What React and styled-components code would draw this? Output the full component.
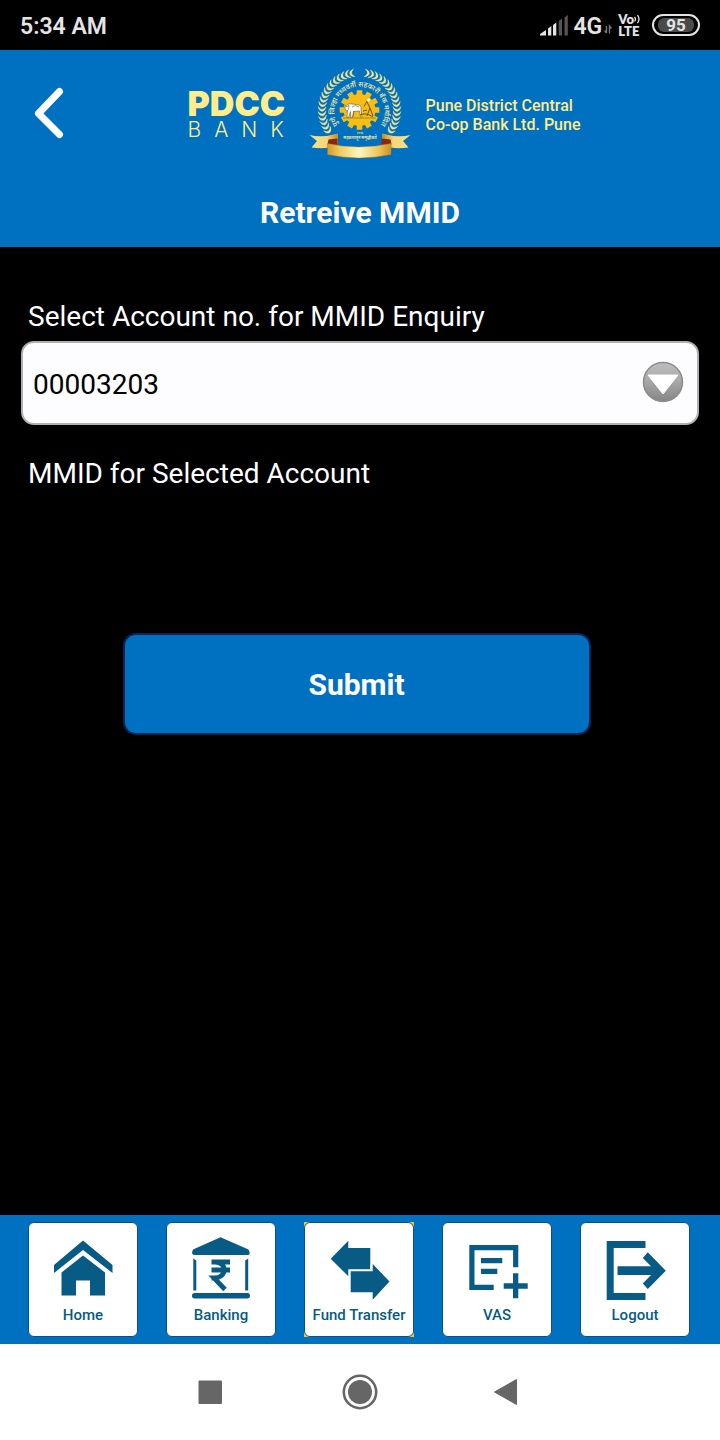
import React from "react";
import styled, { createGlobalStyle } from "styled-components";

const GlobalStyle = createGlobalStyle`
  *, *::before, *::after { box-sizing: border-box; }
  body { margin: 0; background: #000; font-family: Roboto, "Liberation Sans", sans-serif; }
  button, select { font: inherit; }
`;

const blue = "#0070c0";
const ink = "#075b85";
const cream = "#ffec8a";

const Screen = styled.div`
  min-height: 100vh;
  display: flex;
  flex-direction: column;
  background: #000;
`;

const StatusBar = styled.div`
  height: 50px;
  padding: 0 20px;
  display: flex;
  align-items: center;
  justify-content: space-between;
  color: #e4e4e4;
`;

const Clock = styled.time`
  padding-top: 2px;
  font-size: 23px;
  font-weight: 600;
`;

const StatusIcons = styled.div`
  display: flex;
  align-items: center;
`;

const Network = styled.span`
  padding: 2px 2px 0 5px;
  font-size: 23px;
  font-weight: 600;
`;

const Volte = styled.span`
  display: grid;
  margin: 0 11px 0 6px;
  font-family: Lato, sans-serif;
  font-size: 13px;
  font-weight: 800;
  line-height: 12px;
`;

const VoLine = styled.span`
  display: flex;
  align-items: center;
`;

const Battery = styled.span`
  width: 48px;
  height: 22px;
  padding: 2px 4px;
  border: 2px solid #e4e4e4;
  border-radius: 11px;
  display: flex;
`;

const Charge = styled.span`
  flex: 1;
  border-radius: 6px;
  background: #4a4a4a;
  font-size: 17px;
  font-weight: 700;
  line-height: 14px;
  text-align: center;
`;

const Header = styled.header`
  background: ${blue};
  padding: 10px 30px 16px;
`;

const BrandRow = styled.div`
  display: grid;
  grid-template-columns: 1fr auto 1fr;
  align-items: center;
`;

const BackButton = styled.button`
  justify-self: start;
  padding: 0 4px;
  border: 0;
  background: none;
  display: flex;
`;

const Brand = styled.div`
  display: flex;
  align-items: center;
  margin-left: 48px;
`;

const Wordmark = styled.div`
  width: 112px;
  padding-top: 6px;
  color: ${cream};
  font-family: Inter, sans-serif;
`;

const WordTop = styled.div`
  font-size: 34px;
  font-weight: 900;
  line-height: 28px;
`;

const WordBottom = styled.div`
  font-size: 21px;
  font-weight: 300;
  line-height: 24px;
  letter-spacing: 13px;
  white-space: nowrap;
`;

const BankName = styled.p`
  margin: 0 0 0 6px;
  padding-top: 4px;
  color: ${cream};
  font-size: 16px;
  font-weight: 500;
  line-height: 19px;
`;

const Title = styled.h1`
  margin: 30px 0 0;
  color: #fff;
  font-size: 30px;
  font-weight: 700;
  line-height: 36px;
  text-align: center;
`;

const Form = styled.form`
  flex: 1;
  padding: 52px 21px 0;
  color: #fff;
  font-size: 28px;
`;

const Caption = styled.label`
  display: block;
  padding: 0 7px;
  line-height: 36px;
`;

const Field = styled.div`
  position: relative;
  margin: 6px 0 31px;
`;

const AccountSelect = styled.select`
  display: block;
  appearance: none;
  width: 100%;
  height: 84px;
  padding: 2px 64px 0 10px;
  border: 2px solid #b0b0b0;
  border-radius: 13px;
  background: #fdfdff;
  color: #000;
  font-size: 28px;
`;

const SelectArrow = styled.svg`
  position: absolute;
  right: 15px;
  top: 20px;
  pointer-events: none;
`;

const Result = styled.output`
  display: block;
  min-height: 105px;
`;

const SubmitButton = styled.button`
  display: block;
  width: 69%;
  height: 102px;
  margin: 36px 0 0 15%;
  border: 2px solid #08245a;
  border-radius: 13px;
  background: ${blue};
  color: #fff;
  font-size: 30px;
  font-weight: 700;
`;

const TabBar = styled.nav`
  display: flex;
  justify-content: center;
  gap: 28px;
  height: 129px;
  padding: 7px 30px 7px 28px;
  background: ${blue};
`;

const Tab = styled.a`
  flex: 0 1 110px;
  display: flex;
  background: ${(p) => (p.$active ? "#f6c321" : "transparent")};
  text-decoration: none;
`;

const TabCard = styled.span`
  flex: 1;
  display: flex;
  flex-direction: column;
  align-items: center;
  padding-top: 13px;
  border: 1px solid #0a517f;
  border-radius: 6px;
  background: #fff;
  color: ${ink};
  font-size: 15px;
  font-weight: 500;
  line-height: 30px;
  white-space: nowrap;
`;

const SystemNav = styled.div`
  height: 96px;
  padding: 0 192px;
  display: flex;
  align-items: center;
  justify-content: space-between;
  background: #fff;
`;

const SystemButton = styled.button`
  width: 36px;
  height: 36px;
  padding: 0;
  border: 0;
  background: none;
`;

const icons = {
  home: (
    <path d="M30 .5 59.500 25v8L30 10 1 33V25ZM30 15.500 52 32.500v23H37v-15H23v15H8.500v-23Z" />
  ),
  banking: (
    <>
      <path d="M29.500-2.800 57.500 9.500Q60.500 15 56 15H4Q-.5 15 2 9.500Z" />
      <rect x="1" y="53" width="58" height="5.500" rx="2.700" />
      <path d="M2.300 18.500 5.300 20.500v30h-3ZM57.200 18.500 54.200 20.500v30h3Z" />
      <path d="M20.500 22H39M20.500 30H39M24 22C36.500 22 36.500 38 23 38L34 49.500M20.500 38H25" fill="none" stroke={ink} strokeWidth="4.800" />
    </>
  ),
  transfer: (
    <path d="M1.700 18.700 19.300.7V8h22v14.500l-.3 6.800H19.300v7ZM21.700 31.300h22V24L60.500 41.500 43.700 59.700v-7.400h-22Z" />
  ),
  vas: (
    <>
      <path d="M26.700 47.400H4.900V7.600H48.700V27.300" fill="none" stroke={ink} strokeWidth="5.200" />
      <path d="M14 18h21.300v5.300H14ZM14 28.700h16.300V34H14ZM46 33.300h5.300v10h9.400v5.400h-9.400v9.600H46v-9.600h-9.300v-5.400H46Z" />
    </>
  ),
  logout: (
    <>
      <path d="M40.500 4.600H5.200V56.600H40.500" fill="none" stroke={ink} strokeWidth="7" />
      <path d="M12.500 26.300H46L37.800 18 42.800 12.300 60.800 30.700 42.800 49 37.800 43.500 46 35H12.500Z" />
    </>
  ),
};

const tabs = [
  { id: "home", label: "Home" },
  { id: "banking", label: "Banking" },
  { id: "transfer", label: "Fund Transfer", active: true },
  { id: "vas", label: "VAS" },
  { id: "logout", label: "Logout" },
];

const CX = 59.5;
const CY = 50;

function point(r, deg) {
  const a = (deg * Math.PI) / 180;
  return [CX + r * Math.sin(a), CY - r * Math.cos(a)];
}

function gearPath() {
  const pts = [];
  for (let i = 0; i < 12; i += 1) {
    const a = i * 30;
    [[16, -10], [20, -8], [20, 8], [16, 10]].forEach(([r, d]) => pts.push(point(r, a + d)));
  }
  return "M" + pts.map((p) => p.map((n) => n.toFixed(1)).join(" ")).join("L") + "Z";
}

const leafAngles = Array.from({ length: 17 }, (_, i) => 11 + i * 7);

function Emblem() {
  return (
    <svg width="120" height="105" viewBox="0 0 120 105" role="img" aria-label="PDCC Bank emblem">
      <defs>
        <linearGradient id="ribbon">
          <stop offset="0" stopColor="#d39a2c" />
          <stop offset=".2" stopColor="#f0cc60" />
          <stop offset=".5" stopColor="#fff6c0" />
          <stop offset=".8" stopColor="#edc65a" />
          <stop offset="1" stopColor="#cf9222" />
        </linearGradient>
        <linearGradient id="tailLeft">
          <stop offset="0" stopColor="#f7e08a" />
          <stop offset=".6" stopColor="#f4d77a" />
          <stop offset="1" stopColor="#c98a22" />
        </linearGradient>
        <linearGradient id="tailRight" x1="1" x2="0">
          <stop offset="0" stopColor="#f7e08a" />
          <stop offset=".6" stopColor="#f4d77a" />
          <stop offset="1" stopColor="#c98a22" />
        </linearGradient>
        <path id="motto" d="M42 69.500A25 25 0 1 1 77 69.500" />
      </defs>
      {leafAngles.flatMap((a) =>
        [-1, 1].map((side) => {
          const [x, y] = point(37.5, a * side);
          return (
            <path
              key={`${a}${side}`}
              d="M-4-2Q-2 .8 0 .8Q2 .8 4-2Q3.200 2.200 0 2.800Q-3.200 2.200-4-2Z"
              fill="#f8e58c"
              stroke="#f8e58c"
              strokeWidth=".4"
              transform={`translate(${x} ${y}) rotate(${side * (a - 90)})`}
            />
          );
        })
      )}
      <path d={gearPath()} fill="#f8bd12" />
      <g fill="#fff" stroke="#49402a" strokeWidth=".5">
        <path d="M46 47q1-4 6-3l7 1q3 1 2 5l1 7h-1.500l-1-6-6 .5-1 6H51l-.5-6-2 6H47l.500-7Z" />
        <path d="M45 45.500l2 1.200 2-1.400-.5 4-1.500 2-1.700-2Z" />
        <path d="M52 47q3-3 7 0M54 51l-1 6" fill="none" />
      </g>
      <g fill="none" stroke="#4b3b17" strokeWidth=".8">
        <path d="M68 39.500l-4 7M67 42l3 6-3 8M70 48l3 8M63 51l4-1M60 55q6-3 13 2" />
        <path d="M43 58h33" stroke="#6d8a3a" />
      </g>
      <circle cx="68.500" cy="40" r="1.600" fill="#fff" />
      <text fill="#ffed9a" fontFamily="'Noto Sans', 'Noto Sans Devanagari', sans-serif" fontSize="7" fontWeight="500">
        <textPath href="#motto" startOffset="50%" textAnchor="middle">
          पुणे जिल्हा मध्यवर्ती सहकारी बँक मर्यादित
        </textPath>
      </text>
      <g fill="#ffed9a" fontFamily="'Noto Sans', 'Noto Sans Devanagari', sans-serif" textAnchor="middle" fontWeight="600">
        <text x="60" y="74" fontSize="3">१९१७</text>
        <text x="60" y="79" fontSize="4">सहकारातून समृद्धीकडे</text>
      </g>
      <path d="M9.500 75q13 3 28.500-1.500V85q-12 5-26.500 2.500l5.500-6.500Z" fill="url(#tailLeft)" />
      <path d="M110.500 75q-13 3-28.500-1.500V85q12 5 26.500 2.500l-5.500-6.500Z" fill="url(#tailRight)" />
      <path d="M27.500 84.500l1-5 9-1v7ZM91.500 84.500l-1-5-9-1v7Z" fill="#8a2414" />
      <path d="M27.500 83.500q31 7 63.500 0v11q-32 7-63.500 0Z" fill="url(#ribbon)" stroke="#b9781c" strokeWidth=".4" />
    </svg>
  );
}

function Signal() {
  return (
    <svg width="28" height="21" viewBox="0 0 28 21" aria-hidden="true">
      <path d="M0 20.500v-1.500l6-4v5.500ZM8 20.500v-7l3.300-2.500v9.500ZM13 20.500V10l3.300-2.500v13Z" fill="#e4e4e4" />
      <path d="M18.700 20.500V6l3.300-2.500v17ZM24.500 20.500V2.500l3.300-2.500v20.500Z" fill="#555" />
    </svg>
  );
}

export default function App() {
  return (
    <Screen>
      <GlobalStyle />
      <StatusBar>
        <Clock>5:34 AM</Clock>
        <StatusIcons>
          <Signal />
          <Network>4G</Network>
          <svg width="8" height="17" viewBox="0 0 8 17" aria-hidden="true">
            <path d="M2.500 9v7M.5 13.500l2 2.500M5.500 16.500V9l2 2.500" fill="none" stroke="#777" strokeWidth="1.400" />
          </svg>
          <Volte>
            <VoLine>
              Vo
              <svg width="7" height="10" viewBox="0 0 7 10" aria-hidden="true">
                <path d="M.5 3q2 2.200 0 4.400M3.500 1.200q3 4 0 8" fill="none" stroke="#e4e4e4" strokeWidth="1.300" />
              </svg>
            </VoLine>
            <span>LTE</span>
          </Volte>
          <Battery>
            <Charge>95</Charge>
          </Battery>
        </StatusIcons>
      </StatusBar>

      <Header>
        <BrandRow>
          <BackButton type="button" aria-label="Back">
            <svg width="30" height="52" viewBox="0 0 30 52" aria-hidden="true">
              <path d="M25.500 4.500 4.500 26.500 25.500 47.500" fill="none" stroke="#fff" strokeWidth="7" strokeLinecap="round" strokeLinejoin="round" />
            </svg>
          </BackButton>
          <Brand>
            <Wordmark>
              <WordTop>PDCC</WordTop>
              <WordBottom>BANK</WordBottom>
            </Wordmark>
            <Emblem />
            <BankName>
              Pune District Central
              <br />
              Co-op Bank Ltd. Pune
            </BankName>
          </Brand>
        </BrandRow>
        <Title>Retreive MMID</Title>
      </Header>

      <Form onSubmit={(e) => e.preventDefault()}>
        <Caption htmlFor="account">Select Account no. for MMID Enquiry</Caption>
        <Field>
          <AccountSelect id="account" defaultValue="00003203">
            <option>00003203</option>
          </AccountSelect>
          <SelectArrow width="42" height="42" viewBox="0 0 42 42" aria-hidden="true">
            <defs>
              <linearGradient id="knob" x2="0" y2="1">
                <stop offset="0" stopColor="#bdbdbd" />
                <stop offset=".45" stopColor="#aaa" />
                <stop offset="1" stopColor="#858585" />
              </linearGradient>
            </defs>
            <circle cx="21" cy="21" r="19.500" fill="url(#knob)" stroke="#8c8c8c" strokeWidth="1.500" />
            <path d="M6 14h30L21 33Z" fill="#fff" stroke="#fff" strokeLinejoin="round" />
          </SelectArrow>
        </Field>
        <Caption htmlFor="mmid">MMID for Selected Account</Caption>
        <Result id="mmid" />
        <SubmitButton type="submit">Submit</SubmitButton>
      </Form>

      <TabBar>
        {tabs.map((tab) => (
          <Tab key={tab.id} href={`#${tab.id}`} $active={tab.active}>
            <TabCard>
              <svg width="60" height="64" viewBox="0 -4 60 64" overflow="visible" fill={ink} aria-hidden="true">
                {icons[tab.id]}
              </svg>
              {tab.label}
            </TabCard>
          </Tab>
        ))}
      </TabBar>

      <SystemNav>
        <SystemButton type="button" aria-label="Recent apps">
          <svg width="36" height="36" viewBox="0 0 36 36" fill="#666">
            <rect x="6.500" y="6.500" width="23.500" height="23.500" rx="1" />
          </svg>
        </SystemButton>
        <SystemButton type="button" aria-label="Home screen">
          <svg width="36" height="36" viewBox="0 0 36 36" fill="#666">
            <circle cx="18" cy="18" r="12" />
            <circle cx="18" cy="18" r="16.200" fill="none" stroke="#666" strokeWidth="2.600" />
          </svg>
        </SystemButton>
        <SystemButton type="button" aria-label="Previous">
          <svg width="36" height="36" viewBox="0 0 36 36" fill="#666">
            <path d="M2.500 18 24.500 5.500V30.500Z" stroke="#666" strokeLinejoin="round" />
          </svg>
        </SystemButton>
      </SystemNav>
    </Screen>
  );
}
